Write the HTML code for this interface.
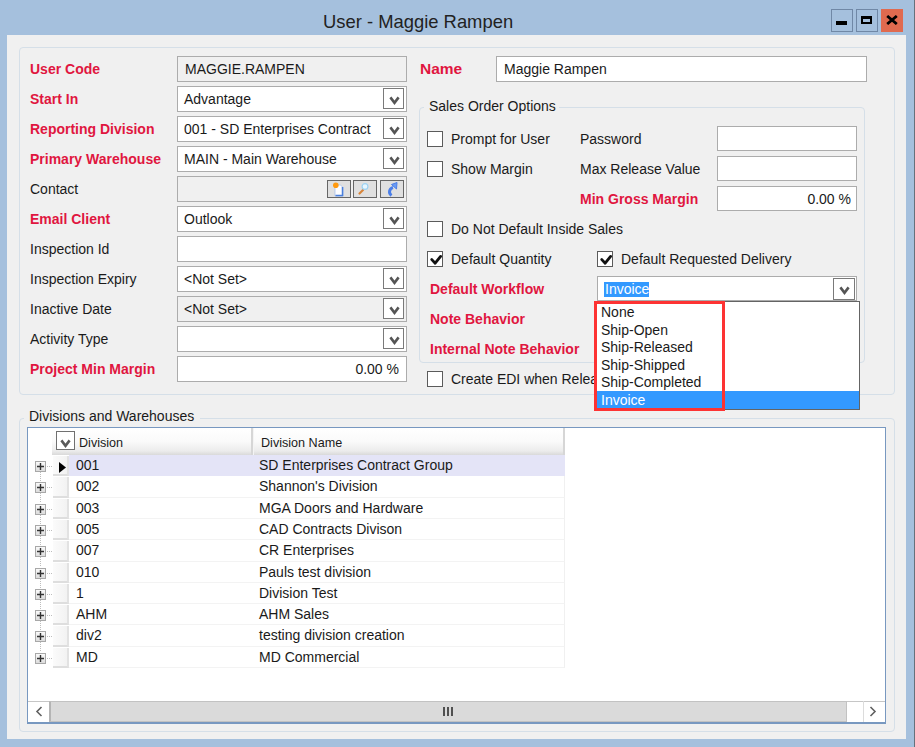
<!DOCTYPE html>
<html><head><meta charset="utf-8">
<style>
*{margin:0;padding:0;box-sizing:border-box}
html,body{width:915px;height:747px;overflow:hidden}
body{background:#a5c0dd;position:relative;font-family:"Liberation Sans",sans-serif;font-size:14px;color:#1a1a1a}
.a{position:absolute}
.t{position:absolute;white-space:nowrap;line-height:16px;font-size:14px}
.r{color:#e0163f;font-weight:bold}
</style></head><body>

<div class="t " style="left:323px;top:14px;font-size:18.4px;color:#222;">User - Maggie Rampen</div>
<div class="a" style="left:831px;top:9px;width:22px;height:23px;border:1px solid #7088a6"><div class="a" style="left:4px;top:11px;width:11px;height:4px;background:#000"></div></div>
<div class="a" style="left:856px;top:9px;width:22px;height:23px;border:1px solid #7088a6"><div class="a" style="left:4px;top:6px;width:11px;height:8px;border:2px solid #000;border-top-width:3px;border-left-width:2.5px;border-right-width:2.5px"></div></div>
<div class="a" style="left:881px;top:9px;width:22px;height:23px;background:#e06a4f"><svg class="a" style="left:5px;top:6px" width="12" height="10" viewBox="0 0 12 10"><path d="M1.2 1 L10.8 9 M10.8 1 L1.2 9" stroke="#000" stroke-width="2.8"/></svg></div>
<div class="a" style="left:914px;top:0px;width:1px;height:747px;background:#66717b"></div>
<div class="a" style="left:7px;top:35px;width:899px;height:704px;background:#f0f0f0"></div>
<div class="a" style="left:19px;top:47px;width:876px;height:348px;border:1px solid #d5dfe8;border-radius:4px"></div>
<div class="t r" style="left:30px;top:61px;">User Code</div>
<div class="t r" style="left:30px;top:91px;">Start In</div>
<div class="t r" style="left:30px;top:121px;">Reporting Division</div>
<div class="t r" style="left:30px;top:151px;">Primary Warehouse</div>
<div class="t " style="left:30px;top:181px;">Contact</div>
<div class="t r" style="left:30px;top:211px;">Email Client</div>
<div class="t " style="left:30px;top:241px;">Inspection Id</div>
<div class="t " style="left:30px;top:271px;">Inspection Expiry</div>
<div class="t " style="left:30px;top:301px;">Inactive Date</div>
<div class="t " style="left:30px;top:331px;">Activity Type</div>
<div class="t r" style="left:30px;top:361px;">Project Min Margin</div>
<div class="a" style="left:177px;top:56px;width:230px;height:26px;background:#f0f0f0;border:1px solid #acacac"></div>
<div class="t " style="left:185px;top:61px;">MAGGIE.RAMPEN</div>
<div class="a" style="left:177px;top:86px;width:230px;height:26px;background:#fff;border:1px solid #acacac"></div>
<div class="a" style="left:383px;top:88px;width:21px;height:21px;border:1px solid #7a7a7a;background:#fff"><div class="a" style="left:5px;top:7px;line-height:0"><svg width="11" height="9" viewBox="0 0 11 9"><path d="M1.4 1.4 L5.5 6.8 L9.6 1.4" fill="none" stroke="#555" stroke-width="2.6"/></svg></div></div>
<div class="t " style="left:184px;top:91px;">Advantage</div>
<div class="a" style="left:177px;top:116px;width:230px;height:26px;background:#fff;border:1px solid #acacac"></div>
<div class="a" style="left:383px;top:118px;width:21px;height:21px;border:1px solid #7a7a7a;background:#fff"><div class="a" style="left:5px;top:7px;line-height:0"><svg width="11" height="9" viewBox="0 0 11 9"><path d="M1.4 1.4 L5.5 6.8 L9.6 1.4" fill="none" stroke="#555" stroke-width="2.6"/></svg></div></div>
<div class="t " style="left:184px;top:121px;">001 - SD Enterprises Contract</div>
<div class="a" style="left:177px;top:146px;width:230px;height:26px;background:#fff;border:1px solid #acacac"></div>
<div class="a" style="left:383px;top:148px;width:21px;height:21px;border:1px solid #7a7a7a;background:#fff"><div class="a" style="left:5px;top:7px;line-height:0"><svg width="11" height="9" viewBox="0 0 11 9"><path d="M1.4 1.4 L5.5 6.8 L9.6 1.4" fill="none" stroke="#555" stroke-width="2.6"/></svg></div></div>
<div class="t " style="left:184px;top:151px;">MAIN - Main Warehouse</div>
<div class="a" style="left:177px;top:176px;width:230px;height:26px;background:#f0f0f0;border:1px solid #acacac"></div>
<div class="a" style="left:327px;top:180px;width:24px;height:18px;background:#e0e0e0;border:1px solid #666"></div>
<div class="a" style="left:353px;top:180px;width:24px;height:18px;background:#e0e0e0;border:1px solid #666"></div>
<div class="a" style="left:380px;top:180px;width:24px;height:18px;background:#e0e0e0;border:1px solid #666"></div>
<svg class="a" style="left:327px;top:180px" width="24" height="18" viewBox="0 0 24 18"><path d="M8 5 L13.5 5 L16 7.5 L16 16 L8 16Z" fill="#fdfdff" stroke="#a9c2ee" stroke-width="0.8"/><path d="M15.5 7 L15.5 15.5 L8.5 15.5" fill="none" stroke="#4a7fdc" stroke-width="1.5"/><circle cx="8.8" cy="5.2" r="2.8" fill="#ff9a10"/></svg>
<svg class="a" style="left:353px;top:180px" width="24" height="18" viewBox="0 0 24 18"><path d="M6.5 13.5 L10 10" stroke="#d8843a" stroke-width="2.2" stroke-linecap="round"/><circle cx="12" cy="6.5" r="2.9" fill="#e6f6ff" stroke="#9dd2f2" stroke-width="1.2"/></svg>
<svg class="a" style="left:380px;top:180px" width="24" height="18" viewBox="0 0 24 18"><path d="M11.5 15.5 C8 13 9.5 8.5 13 7.5" fill="none" stroke="#4a7ee8" stroke-width="3"/><path d="M11.5 4.5 L17 2.5 L16.5 9 Z" fill="#6a9bf3" stroke="#4a7ee8" stroke-width="1"/></svg>
<div class="a" style="left:177px;top:206px;width:230px;height:26px;background:#fff;border:1px solid #acacac"></div>
<div class="a" style="left:383px;top:208px;width:21px;height:21px;border:1px solid #7a7a7a;background:#fff"><div class="a" style="left:5px;top:7px;line-height:0"><svg width="11" height="9" viewBox="0 0 11 9"><path d="M1.4 1.4 L5.5 6.8 L9.6 1.4" fill="none" stroke="#555" stroke-width="2.6"/></svg></div></div>
<div class="t " style="left:184px;top:211px;">Outlook</div>
<div class="a" style="left:177px;top:236px;width:230px;height:26px;background:#fff;border:1px solid #acacac"></div>
<div class="a" style="left:177px;top:266px;width:230px;height:26px;background:#fff;border:1px solid #acacac"></div>
<div class="a" style="left:383px;top:268px;width:21px;height:21px;border:1px solid #7a7a7a;background:#fff"><div class="a" style="left:5px;top:7px;line-height:0"><svg width="11" height="9" viewBox="0 0 11 9"><path d="M1.4 1.4 L5.5 6.8 L9.6 1.4" fill="none" stroke="#555" stroke-width="2.6"/></svg></div></div>
<div class="t " style="left:184px;top:271px;">&lt;Not Set&gt;</div>
<div class="a" style="left:177px;top:296px;width:230px;height:26px;background:#f0f0f0;border:1px solid #acacac"></div>
<div class="a" style="left:383px;top:298px;width:21px;height:21px;border:1px solid #7a7a7a;background:#fff"><div class="a" style="left:5px;top:7px;line-height:0"><svg width="11" height="9" viewBox="0 0 11 9"><path d="M1.4 1.4 L5.5 6.8 L9.6 1.4" fill="none" stroke="#555" stroke-width="2.6"/></svg></div></div>
<div class="t " style="left:184px;top:301px;">&lt;Not Set&gt;</div>
<div class="a" style="left:177px;top:326px;width:230px;height:26px;background:#fff;border:1px solid #acacac"></div>
<div class="a" style="left:383px;top:328px;width:21px;height:21px;border:1px solid #7a7a7a;background:#fff"><div class="a" style="left:5px;top:7px;line-height:0"><svg width="11" height="9" viewBox="0 0 11 9"><path d="M1.4 1.4 L5.5 6.8 L9.6 1.4" fill="none" stroke="#555" stroke-width="2.6"/></svg></div></div>
<div class="a" style="left:177px;top:356px;width:230px;height:26px;background:#fff;border:1px solid #acacac"></div>
<div class="t" style="left:177px;top:361px;width:222px;text-align:right">0.00 %</div>
<div class="t r" style="left:420px;top:61px;font-size:15.5px;">Name</div>
<div class="a" style="left:496px;top:56px;width:371px;height:26px;background:#fff;border:1px solid #acacac"></div>
<div class="t " style="left:504px;top:61px;">Maggie Rampen</div>
<div class="a" style="left:419px;top:107px;width:446px;height:256px;border:1px solid #d5dfe8;border-radius:4px"></div>
<div class="a" style="left:424px;top:96px;width:135px;height:18px;background:#f0f0f0"></div>
<div class="t " style="left:429px;top:98px;">Sales Order Options</div>
<div class="a" style="left:427px;top:131px;width:16px;height:16px;border:1px solid #5b5b5b;background:#fff"></div>
<div class="t " style="left:451px;top:131px;">Prompt for User</div>
<div class="a" style="left:427px;top:161px;width:16px;height:16px;border:1px solid #5b5b5b;background:#fff"></div>
<div class="t " style="left:451px;top:161px;">Show Margin</div>
<div class="t " style="left:580px;top:131px;">Password</div>
<div class="a" style="left:717px;top:126px;width:140px;height:25px;background:#fff;border:1px solid #acacac"></div>
<div class="t " style="left:580px;top:161px;">Max Release Value</div>
<div class="a" style="left:717px;top:156px;width:140px;height:25px;background:#fff;border:1px solid #acacac"></div>
<div class="t r" style="left:580px;top:191px;">Min Gross Margin</div>
<div class="a" style="left:717px;top:186px;width:140px;height:25px;background:#fff;border:1px solid #acacac"></div>
<div class="t" style="left:717px;top:191px;width:134px;text-align:right">0.00 %</div>
<div class="a" style="left:427px;top:221px;width:16px;height:16px;border:1px solid #5b5b5b;background:#fff"></div>
<div class="t " style="left:451px;top:221px;">Do Not Default Inside Sales</div>
<div class="a" style="left:427px;top:251px;width:16px;height:16px;border:1px solid #5b5b5b;background:#fff"><svg class="a" style="left:1px;top:1px" width="13" height="13" viewBox="0 0 13 13"><path d="M2.8 6.6 L6.2 10.2 L11.6 3.4" fill="none" stroke="#111" stroke-width="2.8" stroke-linecap="round" stroke-linejoin="round"/></svg></div>
<div class="t " style="left:451px;top:251px;">Default Quantity</div>
<div class="a" style="left:597px;top:251px;width:16px;height:16px;border:1px solid #5b5b5b;background:#fff"><svg class="a" style="left:1px;top:1px" width="13" height="13" viewBox="0 0 13 13"><path d="M2.8 6.6 L6.2 10.2 L11.6 3.4" fill="none" stroke="#111" stroke-width="2.8" stroke-linecap="round" stroke-linejoin="round"/></svg></div>
<div class="t " style="left:621px;top:251px;">Default Requested Delivery</div>
<div class="t r" style="left:430px;top:281px;">Default Workflow</div>
<div class="t r" style="left:430px;top:311px;">Note Behavior</div>
<div class="t r" style="left:430px;top:341px;">Internal Note Behavior</div>
<div class="a" style="left:427px;top:371px;width:16px;height:16px;border:1px solid #5b5b5b;background:#fff"></div>
<div class="t " style="left:451px;top:371px;">Create EDI when Release</div>
<div class="a" style="left:597px;top:276px;width:260px;height:25px;background:#fff;border:1px solid #acacac"></div>
<div class="a" style="left:833px;top:278px;width:22px;height:22px;border:1px solid #7a7a7a;background:#fff"><div class="a" style="left:5px;top:7px;line-height:0"><svg width="11" height="9" viewBox="0 0 11 9"><path d="M1.4 1.4 L5.5 6.8 L9.6 1.4" fill="none" stroke="#555" stroke-width="2.6"/></svg></div></div>
<div class="a" style="left:604px;top:282px;width:45px;height:15px;background:#3399ff"></div>
<div class="t " style="left:605px;top:281px;color:#fff;">Invoice</div>
<div class="a" style="left:19px;top:418px;width:876px;height:314px;border:1px solid #d5dfe8;border-radius:4px"></div>
<div class="a" style="left:24px;top:409px;width:176px;height:18px;background:#f0f0f0"></div>
<div class="t " style="left:29px;top:408px;">Divisions and Warehouses</div>
<div class="a" style="left:27px;top:427px;width:859px;height:297px;background:#fff;border:1px solid #7898c0;border-bottom-width:2px"></div>
<div class="a" style="left:52px;top:428px;width:201px;height:27px;background:linear-gradient(#ffffff,#fafafa 50%,#ececec 85%,#d9d9d9);border-right:2px solid #d6d6d6"></div>
<div class="a" style="left:253px;top:428px;width:312px;height:27px;background:linear-gradient(#ffffff,#fafafa 50%,#ececec 85%,#d9d9d9);border-right:2px solid #d6d6d6;border-left:1px solid #f4f4f4"></div>
<div class="a" style="left:56px;top:431px;width:19px;height:19px;border:1px solid #707070;background:#fff"><div class="a" style="left:3px;top:7px;line-height:0"><svg width="11" height="9" viewBox="0 0 11 9"><path d="M1.4 1.4 L5.5 6.8 L9.6 1.4" fill="none" stroke="#5a5a5a" stroke-width="2.6"/></svg></div></div>
<div class="t " style="left:79px;top:435px;font-size:12.6px;">Division</div>
<div class="t " style="left:261px;top:435px;font-size:12.6px;">Division Name</div>
<div class="a" style="left:69px;top:455px;width:496px;height:21px;background:#e4e4f7"></div>
<div class="a" style="left:53px;top:456px;width:16px;height:20px;background:linear-gradient(90deg,#fbfbfb,#f2f2f2);border-right:2px solid #e2e2e2;border-bottom:2px solid #dedede"></div>
<div class="a" style="left:35px;top:461px;width:11px;height:11px;border:1px solid #a8a8a8;background:linear-gradient(#fafafa,#dcdcdc)"><svg class="a" style="left:-1px;top:-1px" width="11" height="11" viewBox="0 0 11 11"><path d="M2 5.5 H9 M5.5 2 V9" stroke="#333" stroke-width="1.4"/></svg></div>
<div class="a" style="left:47px;top:466px;width:5px;height:1px;background:repeating-linear-gradient(90deg,#bdbdbd 0 1px,transparent 1px 2px)"></div>
<div class="a" style="left:40px;top:472px;width:1px;height:10px;background:repeating-linear-gradient(#bdbdbd 0 1px,transparent 1px 2px)"></div>
<div class="t " style="left:76px;top:457px;">001</div>
<div class="t " style="left:259px;top:457px;">SD Enterprises Contract Group</div>
<div class="a" style="left:69px;top:476px;width:496px;height:22px;border-bottom:1px solid #f3f3f3;border-right:1px solid #f0f0f0"></div>
<div class="a" style="left:53px;top:477px;width:16px;height:21px;background:linear-gradient(90deg,#fbfbfb,#f2f2f2);border-right:2px solid #e2e2e2;border-bottom:2px solid #dedede"></div>
<div class="a" style="left:35px;top:482px;width:11px;height:11px;border:1px solid #a8a8a8;background:linear-gradient(#fafafa,#dcdcdc)"><svg class="a" style="left:-1px;top:-1px" width="11" height="11" viewBox="0 0 11 11"><path d="M2 5.5 H9 M5.5 2 V9" stroke="#333" stroke-width="1.4"/></svg></div>
<div class="a" style="left:47px;top:487px;width:5px;height:1px;background:repeating-linear-gradient(90deg,#bdbdbd 0 1px,transparent 1px 2px)"></div>
<div class="a" style="left:40px;top:493px;width:1px;height:10px;background:repeating-linear-gradient(#bdbdbd 0 1px,transparent 1px 2px)"></div>
<div class="t " style="left:76px;top:478px;">002</div>
<div class="t " style="left:259px;top:478px;">Shannon's Division</div>
<div class="a" style="left:69px;top:498px;width:496px;height:21px;border-bottom:1px solid #f3f3f3;border-right:1px solid #f0f0f0"></div>
<div class="a" style="left:53px;top:499px;width:16px;height:20px;background:linear-gradient(90deg,#fbfbfb,#f2f2f2);border-right:2px solid #e2e2e2;border-bottom:2px solid #dedede"></div>
<div class="a" style="left:35px;top:504px;width:11px;height:11px;border:1px solid #a8a8a8;background:linear-gradient(#fafafa,#dcdcdc)"><svg class="a" style="left:-1px;top:-1px" width="11" height="11" viewBox="0 0 11 11"><path d="M2 5.5 H9 M5.5 2 V9" stroke="#333" stroke-width="1.4"/></svg></div>
<div class="a" style="left:47px;top:509px;width:5px;height:1px;background:repeating-linear-gradient(90deg,#bdbdbd 0 1px,transparent 1px 2px)"></div>
<div class="a" style="left:40px;top:515px;width:1px;height:10px;background:repeating-linear-gradient(#bdbdbd 0 1px,transparent 1px 2px)"></div>
<div class="t " style="left:76px;top:500px;">003</div>
<div class="t " style="left:259px;top:500px;">MGA Doors and Hardware</div>
<div class="a" style="left:69px;top:519px;width:496px;height:21px;border-bottom:1px solid #f3f3f3;border-right:1px solid #f0f0f0"></div>
<div class="a" style="left:53px;top:520px;width:16px;height:20px;background:linear-gradient(90deg,#fbfbfb,#f2f2f2);border-right:2px solid #e2e2e2;border-bottom:2px solid #dedede"></div>
<div class="a" style="left:35px;top:525px;width:11px;height:11px;border:1px solid #a8a8a8;background:linear-gradient(#fafafa,#dcdcdc)"><svg class="a" style="left:-1px;top:-1px" width="11" height="11" viewBox="0 0 11 11"><path d="M2 5.5 H9 M5.5 2 V9" stroke="#333" stroke-width="1.4"/></svg></div>
<div class="a" style="left:47px;top:530px;width:5px;height:1px;background:repeating-linear-gradient(90deg,#bdbdbd 0 1px,transparent 1px 2px)"></div>
<div class="a" style="left:40px;top:536px;width:1px;height:10px;background:repeating-linear-gradient(#bdbdbd 0 1px,transparent 1px 2px)"></div>
<div class="t " style="left:76px;top:521px;">005</div>
<div class="t " style="left:259px;top:521px;">CAD Contracts Divison</div>
<div class="a" style="left:69px;top:540px;width:496px;height:22px;border-bottom:1px solid #f3f3f3;border-right:1px solid #f0f0f0"></div>
<div class="a" style="left:53px;top:541px;width:16px;height:21px;background:linear-gradient(90deg,#fbfbfb,#f2f2f2);border-right:2px solid #e2e2e2;border-bottom:2px solid #dedede"></div>
<div class="a" style="left:35px;top:546px;width:11px;height:11px;border:1px solid #a8a8a8;background:linear-gradient(#fafafa,#dcdcdc)"><svg class="a" style="left:-1px;top:-1px" width="11" height="11" viewBox="0 0 11 11"><path d="M2 5.5 H9 M5.5 2 V9" stroke="#333" stroke-width="1.4"/></svg></div>
<div class="a" style="left:47px;top:551px;width:5px;height:1px;background:repeating-linear-gradient(90deg,#bdbdbd 0 1px,transparent 1px 2px)"></div>
<div class="a" style="left:40px;top:557px;width:1px;height:10px;background:repeating-linear-gradient(#bdbdbd 0 1px,transparent 1px 2px)"></div>
<div class="t " style="left:76px;top:542px;">007</div>
<div class="t " style="left:259px;top:542px;">CR Enterprises</div>
<div class="a" style="left:69px;top:562px;width:496px;height:21px;border-bottom:1px solid #f3f3f3;border-right:1px solid #f0f0f0"></div>
<div class="a" style="left:53px;top:563px;width:16px;height:20px;background:linear-gradient(90deg,#fbfbfb,#f2f2f2);border-right:2px solid #e2e2e2;border-bottom:2px solid #dedede"></div>
<div class="a" style="left:35px;top:568px;width:11px;height:11px;border:1px solid #a8a8a8;background:linear-gradient(#fafafa,#dcdcdc)"><svg class="a" style="left:-1px;top:-1px" width="11" height="11" viewBox="0 0 11 11"><path d="M2 5.5 H9 M5.5 2 V9" stroke="#333" stroke-width="1.4"/></svg></div>
<div class="a" style="left:47px;top:573px;width:5px;height:1px;background:repeating-linear-gradient(90deg,#bdbdbd 0 1px,transparent 1px 2px)"></div>
<div class="a" style="left:40px;top:579px;width:1px;height:10px;background:repeating-linear-gradient(#bdbdbd 0 1px,transparent 1px 2px)"></div>
<div class="t " style="left:76px;top:564px;">010</div>
<div class="t " style="left:259px;top:564px;">Pauls test division</div>
<div class="a" style="left:69px;top:583px;width:496px;height:21px;border-bottom:1px solid #f3f3f3;border-right:1px solid #f0f0f0"></div>
<div class="a" style="left:53px;top:584px;width:16px;height:20px;background:linear-gradient(90deg,#fbfbfb,#f2f2f2);border-right:2px solid #e2e2e2;border-bottom:2px solid #dedede"></div>
<div class="a" style="left:35px;top:589px;width:11px;height:11px;border:1px solid #a8a8a8;background:linear-gradient(#fafafa,#dcdcdc)"><svg class="a" style="left:-1px;top:-1px" width="11" height="11" viewBox="0 0 11 11"><path d="M2 5.5 H9 M5.5 2 V9" stroke="#333" stroke-width="1.4"/></svg></div>
<div class="a" style="left:47px;top:594px;width:5px;height:1px;background:repeating-linear-gradient(90deg,#bdbdbd 0 1px,transparent 1px 2px)"></div>
<div class="a" style="left:40px;top:600px;width:1px;height:10px;background:repeating-linear-gradient(#bdbdbd 0 1px,transparent 1px 2px)"></div>
<div class="t " style="left:76px;top:585px;">1</div>
<div class="t " style="left:259px;top:585px;">Division Test</div>
<div class="a" style="left:69px;top:604px;width:496px;height:21px;border-bottom:1px solid #f3f3f3;border-right:1px solid #f0f0f0"></div>
<div class="a" style="left:53px;top:605px;width:16px;height:20px;background:linear-gradient(90deg,#fbfbfb,#f2f2f2);border-right:2px solid #e2e2e2;border-bottom:2px solid #dedede"></div>
<div class="a" style="left:35px;top:610px;width:11px;height:11px;border:1px solid #a8a8a8;background:linear-gradient(#fafafa,#dcdcdc)"><svg class="a" style="left:-1px;top:-1px" width="11" height="11" viewBox="0 0 11 11"><path d="M2 5.5 H9 M5.5 2 V9" stroke="#333" stroke-width="1.4"/></svg></div>
<div class="a" style="left:47px;top:615px;width:5px;height:1px;background:repeating-linear-gradient(90deg,#bdbdbd 0 1px,transparent 1px 2px)"></div>
<div class="a" style="left:40px;top:621px;width:1px;height:10px;background:repeating-linear-gradient(#bdbdbd 0 1px,transparent 1px 2px)"></div>
<div class="t " style="left:76px;top:606px;">AHM</div>
<div class="t " style="left:259px;top:606px;">AHM Sales</div>
<div class="a" style="left:69px;top:625px;width:496px;height:22px;border-bottom:1px solid #f3f3f3;border-right:1px solid #f0f0f0"></div>
<div class="a" style="left:53px;top:626px;width:16px;height:21px;background:linear-gradient(90deg,#fbfbfb,#f2f2f2);border-right:2px solid #e2e2e2;border-bottom:2px solid #dedede"></div>
<div class="a" style="left:35px;top:631px;width:11px;height:11px;border:1px solid #a8a8a8;background:linear-gradient(#fafafa,#dcdcdc)"><svg class="a" style="left:-1px;top:-1px" width="11" height="11" viewBox="0 0 11 11"><path d="M2 5.5 H9 M5.5 2 V9" stroke="#333" stroke-width="1.4"/></svg></div>
<div class="a" style="left:47px;top:636px;width:5px;height:1px;background:repeating-linear-gradient(90deg,#bdbdbd 0 1px,transparent 1px 2px)"></div>
<div class="a" style="left:40px;top:642px;width:1px;height:10px;background:repeating-linear-gradient(#bdbdbd 0 1px,transparent 1px 2px)"></div>
<div class="t " style="left:76px;top:627px;">div2</div>
<div class="t " style="left:259px;top:627px;">testing division creation</div>
<div class="a" style="left:69px;top:647px;width:496px;height:21px;border-bottom:1px solid #f3f3f3;border-right:1px solid #f0f0f0"></div>
<div class="a" style="left:53px;top:648px;width:16px;height:20px;background:linear-gradient(90deg,#fbfbfb,#f2f2f2);border-right:2px solid #e2e2e2;border-bottom:2px solid #dedede"></div>
<div class="a" style="left:35px;top:653px;width:11px;height:11px;border:1px solid #a8a8a8;background:linear-gradient(#fafafa,#dcdcdc)"><svg class="a" style="left:-1px;top:-1px" width="11" height="11" viewBox="0 0 11 11"><path d="M2 5.5 H9 M5.5 2 V9" stroke="#333" stroke-width="1.4"/></svg></div>
<div class="a" style="left:47px;top:658px;width:5px;height:1px;background:repeating-linear-gradient(90deg,#bdbdbd 0 1px,transparent 1px 2px)"></div>
<div class="t " style="left:76px;top:649px;">MD</div>
<div class="t " style="left:259px;top:649px;">MD Commercial</div>
<svg class="a" style="left:59px;top:462px" width="7" height="11" viewBox="0 0 7 11"><path d="M0 0 L7 5.5 L0 11Z" fill="#000"/></svg>
<div class="a" style="left:28px;top:701px;width:857px;height:21px;background:#fff;border-top:1px solid #c6c6c6"></div>
<div class="a" style="left:49px;top:701px;width:798px;height:21px;background:#dadada;border:1px solid #c2c2c2;border-left:2px solid #b4b4b4"></div>
<div class="a" style="left:443px;top:707px;width:2px;height:9px;background:#505050"></div>
<div class="a" style="left:447px;top:707px;width:2px;height:9px;background:#505050"></div>
<div class="a" style="left:451px;top:707px;width:2px;height:9px;background:#505050"></div>
<svg class="a" style="left:35px;top:706px" width="8" height="11" viewBox="0 0 8 11"><path d="M6.5 1 L2 5.5 L6.5 10" fill="none" stroke="#606060" stroke-width="1.6"/></svg>
<svg class="a" style="left:869px;top:706px" width="8" height="11" viewBox="0 0 8 11"><path d="M1.5 1 L6 5.5 L1.5 10" fill="none" stroke="#606060" stroke-width="1.6"/></svg>
<div class="a" style="left:863px;top:701px;width:1px;height:21px;background:#dcdcdc"></div>
<div class="a" style="left:594px;top:301px;width:266px;height:109px;background:#fff;border:1px solid #646464"></div>
<div class="a" style="left:595px;top:391px;width:264px;height:18px;background:#3399ff"></div>
<div class="t " style="left:601px;top:304px;">None</div>
<div class="t " style="left:601px;top:322px;">Ship-Open</div>
<div class="t " style="left:601px;top:339px;">Ship-Released</div>
<div class="t " style="left:601px;top:357px;">Ship-Shipped</div>
<div class="t " style="left:601px;top:374px;">Ship-Completed</div>
<div class="t " style="left:601px;top:392px;color:#fff;">Invoice</div>
<div class="a" style="left:594px;top:301px;width:131px;height:110px;border:3px solid #fd3333"></div>
</body></html>
